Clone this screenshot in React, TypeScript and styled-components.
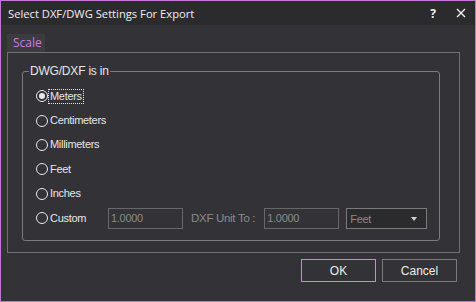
import React from 'react'
import styled, { createGlobalStyle } from 'styled-components'

const GlobalStyle = createGlobalStyle`
    html, body {
        margin: 0;
        padding: 0;
        background: #333337;
    }
    * {
        box-sizing: border-box;
    }
`

const Window = styled.div`
    width: 476px;
    height: 302px;
    border: 1px solid #c276d6;
    background: #333337;
    display: flex;
    flex-direction: column;
    overflow: hidden;
`

const TitleBar = styled.div`
    height: 24px;
    flex: none;
    background: #2b2b2e;
    display: flex;
    align-items: center;
    padding: 0 0 0 7px;
    font-family: 'Open Sans', 'Noto Sans', sans-serif;
    font-size: 11.2px;
    color: #f0f0f0;
`

const Title = styled.div`
    flex: 1;
    padding-top: 1px;
`

const TitleButton = styled.div`
    width: 28px;
    height: 24px;
    display: flex;
    align-items: center;
    justify-content: center;
    font-weight: 700;
    font-size: 12px;
    color: #f0f0f0;
`

const Body = styled.div`
    flex: 1;
    display: flex;
    flex-direction: column;
    padding: 9px 15px 0 6px;
`

const TabStrip = styled.div`
    display: flex;
    height: 18px;
`

const TabButton = styled.div<{ $active?: boolean }>`
    padding: 0 6px;
    width: 38px;
    background: ${(p) => (p.$active ? '#3b3b40' : 'transparent')};
    color: #c97de0;
    font-family: 'Open Sans', 'Noto Sans', sans-serif;
    font-size: 12px;
    line-height: 18px;
`

const TabPanel = styled.div`
    height: 201px;
    border: 1px solid #707070;
    padding: 11px 19px 0 14px;
    display: flex;
    flex-direction: column;
`

const GroupBox = styled.fieldset`
    margin: 0;
    height: 177px;
    border: 1px solid #7a7a7a;
    border-radius: 3px;
    padding: 6px 0 0 13px;
    display: flex;
    flex-direction: column;
    font-family: 'Liberation Sans', Arial, sans-serif;
    font-size: 11px;
    letter-spacing: -0.3px;
    color: #e6e6e6;
`

const Legend = styled.legend`
    padding: 0 1px;
    margin-left: -7px;
    line-height: 14px;
    font-size: 12px;
    letter-spacing: -0.2px;
`

const RadioRow = styled.div`
    height: 24.4px;
    display: flex;
    align-items: center;
`

const RadioCircle = styled.span<{ $checked?: boolean }>`
    width: 12px;
    height: 12px;
    border-radius: 50%;
    border: 1px solid #e8e8e8;
    display: flex;
    align-items: center;
    justify-content: center;
    margin-right: 1px;
    flex: none;

    &::after {
        content: '';
        display: ${(p) => (p.$checked ? 'block' : 'none')};
        width: 6px;
        height: 6px;
        border-radius: 50%;
        background: #e8e8e8;
    }
`

const RadioLabel = styled.span<{ $focused?: boolean; $width?: number }>`
    padding: 0 1px;
    line-height: 13px;
    width: ${(p) => (p.$width ? `${p.$width}px` : 'auto')};
    outline: ${(p) => (p.$focused ? '1px dotted #e8e8e8' : 'none')};
    outline-offset: 0;
`

const TextInput = styled.div`
    width: 75px;
    height: 21px;
    border: 1px solid #686868;
    color: #8a8a8a;
    line-height: 19px;
    padding-left: 2px;
`

const FieldLabel = styled.span`
    color: #8a8a8a;
    margin: 0 9px 0 8px;
    font-size: 11.5px;
`

const Select = styled.div`
    width: 81px;
    height: 21px;
    margin-left: 7px;
    border: 1px solid #7a7a7a;
    background: #2b2b2e;
    color: #8a8a8a;
    display: flex;
    align-items: center;
    justify-content: space-between;
    padding: 1px 9px 0 3px;
`

const Caret = styled.span`
    width: 0;
    height: 0;
    border-left: 3.5px solid transparent;
    border-right: 3.5px solid transparent;
    border-top: 4px solid #d0d0d0;
`

const Footer = styled.div`
    display: flex;
    justify-content: flex-end;
    gap: 6px;
    padding: 6px 3px 0 0;
`

const Button = styled.div<{ $primary?: boolean }>`
    width: 75px;
    height: 23px;
    flex: none;
    border: 1px solid ${(p) => (p.$primary ? '#c98ad8' : '#7a7a7a')};
    display: flex;
    align-items: center;
    justify-content: center;
    font-family: 'Liberation Sans', Arial, sans-serif;
    font-size: 12px;
    color: #ececec;
`

const units = ['Meters', 'Centimeters', 'Millimeters', 'Feet', 'Inches']

export default function App() {
    return (
        <>
            <GlobalStyle />
            <Window>
                <TitleBar>
                    <Title>Select DXF/DWG Settings For Export</Title>
                    <TitleButton>?</TitleButton>
                    <TitleButton>
                        <svg width="10" height="10" viewBox="0 0 10 10">
                            <path d="M1 1 L9 9 M9 1 L1 9" stroke="#f0f0f0" strokeWidth="1.4" />
                        </svg>
                    </TitleButton>
                </TitleBar>
                <Body>
                    <TabStrip>
                        <TabButton $active>Scale</TabButton>
                    </TabStrip>
                    <TabPanel>
                        <GroupBox>
                            <Legend>DWG/DXF is in</Legend>
                            {units.map((u, i) => (
                                <RadioRow key={u}>
                                    <RadioCircle $checked={i === 0} />
                                    <RadioLabel $focused={i === 0}>{u}</RadioLabel>
                                </RadioRow>
                            ))}
                            <RadioRow>
                                <RadioCircle />
                                <RadioLabel $width={59}>Custom</RadioLabel>
                                <TextInput>1.0000</TextInput>
                                <FieldLabel>DXF Unit To :</FieldLabel>
                                <TextInput>1.0000</TextInput>
                                <Select>
                                    Feet
                                    <Caret />
                                </Select>
                            </RadioRow>
                        </GroupBox>
                    </TabPanel>
                    <Footer>
                        <Button $primary>OK</Button>
                        <Button>Cancel</Button>
                    </Footer>
                </Body>
            </Window>
        </>
    )
}
